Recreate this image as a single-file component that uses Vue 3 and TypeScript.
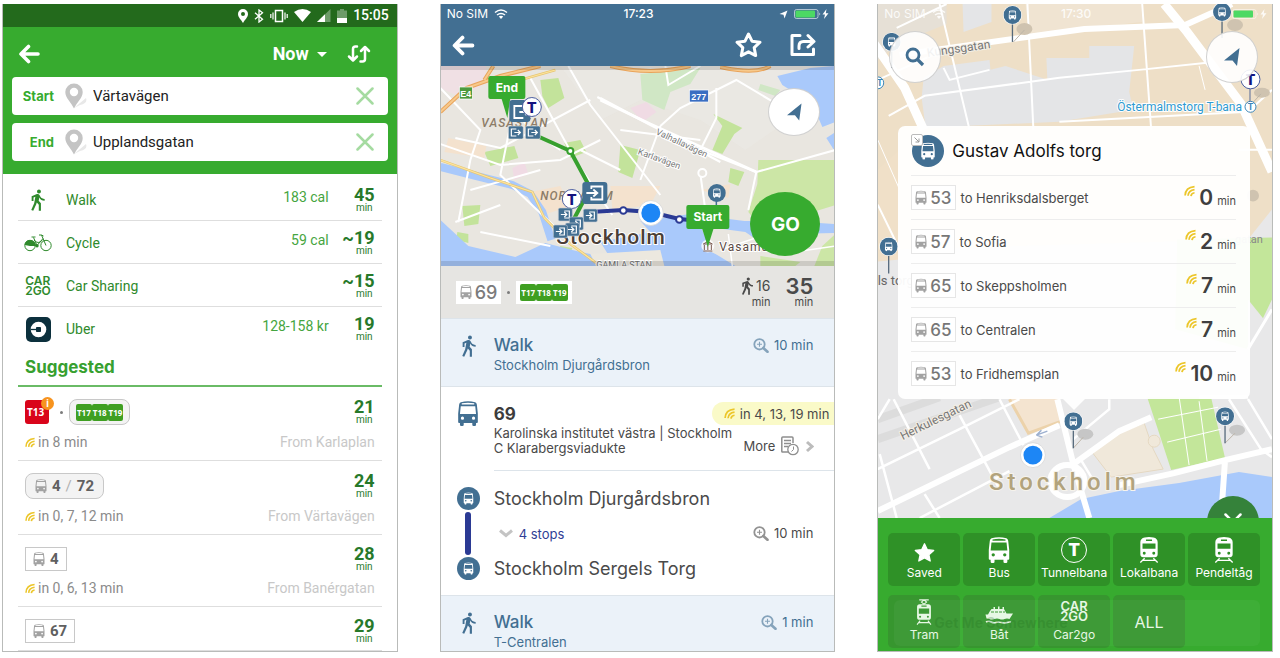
<script setup lang="ts">
import { ref } from 'vue'

interface Mode { icon: string; name: string; extra: string; time: string }
interface Trip { kind: 'metro' | 'group' | 'single'; lines: string[]; wait?: string; from?: string; time: string }
interface Departure { line: string; to: string; min: string }
interface Category { icon: string; name: string }

const start = ref('Värtavägen')
const end = ref('Upplandsgatan')
const when = ref('Now')

const modes: Mode[] = [
  { icon: 'walk', name: 'Walk', extra: '183 cal', time: '45' },
  { icon: 'cycle', name: 'Cycle', extra: '59 cal', time: '~19' },
  { icon: 'car2go', name: 'Car Sharing', extra: '', time: '~15' },
  { icon: 'uber', name: 'Uber', extra: '128-158 kr', time: '19' },
]
const trips: Trip[] = [
  { kind: 'metro', lines: ['T17', 'T18', 'T19'], wait: 'in 8 min', from: 'From Karlaplan', time: '21' },
  { kind: 'group', lines: ['4', '72'], wait: 'in 0, 7, 12 min', from: 'From Värtavägen', time: '24' },
  { kind: 'single', lines: ['4'], wait: 'in 0, 6, 13 min', from: 'From Banérgatan', time: '28' },
  { kind: 'single', lines: ['67'], time: '29' },
]
const departures: Departure[] = [
  { line: '53', to: 'to Henriksdalsberget', min: '0' },
  { line: '57', to: 'to Sofia', min: '2' },
  { line: '65', to: 'to Skeppsholmen', min: '7' },
  { line: '65', to: 'to Centralen', min: '7' },
  { line: '53', to: 'to Fridhemsplan', min: '10' },
]
const categories: Category[] = [
  { icon: 'star', name: 'Saved' },
  { icon: 'bus', name: 'Bus' },
  { icon: 'metro', name: 'Tunnelbana' },
  { icon: 'train', name: 'Lokalbana' },
  { icon: 'train', name: 'Pendeltåg' },
  { icon: 'tram', name: 'Tram' },
  { icon: 'boat', name: 'Båt' },
  { icon: 'car2go', name: 'Car2go' },
]
const stopPins = [
  { x: 1013, y: 15, len: 27 },
  { x: 1223, y: 12, len: 26 },
  { x: 892, y: 42, len: 26 },
  { x: 889, y: 247, len: 27 },
  { x: 1074, y: 422, len: 27 },
  { x: 1226, y: 417, len: 27 },
]
const exits = [
  { x: 508, y: 126 }, { x: 525, y: 126 },
]
const entries = [
  { x: 558, y: 208 }, { x: 583, y: 209 }, { x: 569, y: 217 }, { x: 565, y: 223 }, { x: 553, y: 225 },
]
</script>

<template>
  <svg class="defs" width="0" height="0" aria-hidden="true">
    <symbol id="i-bus" viewBox="0 0 24 28">
      <path fill-rule="evenodd" fill="currentColor" d="M4 1.400Q12-.6 20 1.400Q21.600 2 21.900 4L23 14V23.500Q23 24.600 22 24.600H21V26.600Q21 28 19.600 28H18.200Q16.800 28 16.800 26.600V24.600H7.200V26.600Q7.200 28 5.800 28H4.400Q3 28 3 26.600V24.600H2Q1 24.600 1 23.500V14L2.100 4Q2.400 2 4 1.400ZM5 2.600V4H19V2.600Q12 1.400 5 2.600ZM3.900 6L3 14.500H21L20.100 6ZM5.800 17.400A1.800 1.800 0 1 0 5.800 21A1.800 1.800 0 1 0 5.800 17.400ZM18.200 17.400A1.800 1.800 0 1 0 18.200 21A1.800 1.800 0 1 0 18.200 17.400Z" />
    </symbol>
    <symbol id="i-walk" viewBox="5 1 15 22.500">
      <path fill="currentColor" d="M13.500 5.500c1.100 0 2-.9 2-2s-.9-2-2-2-2 .9-2 2 .9 2 2 2zM9.800 8.900L8.600 15.500 5.600 22.600l2 .7 3-6.500.7-2 2 2.400v6h2.200v-7.500l-2.300-2.600.7-3.500C14.800 11.900 16.800 13 19.300 13v-1.900c-1.900 0-3.500-1-4.300-2.300l-1-1.600c-.4-.7-1-1.100-1.800-1.100-.3 0-.5.1-.8.1L6 8.300V13.200h1.900V9.700l1.900-.8" />
    </symbol>
    <symbol id="i-cycle" viewBox="0 0 28 18">
      <g fill="none" stroke="currentColor" stroke-width="1">
        <circle cx="6" cy="11.500" r="5.200" /><circle cx="22" cy="11.500" r="5.200" />
        <path d="M6 11.500H13L19 4.500M13 11.500L9.500 3.500M7.500 3H11.500M22 11.500L17.500 1H15M17.500 1L19.500 2M10 6Q14 11 18.500 6" />
      </g>
      <path fill="currentColor" d="M.6 11Q1.500 5.500 7 6Q11.500 7 12 11.500L6 12Z" /><circle cx="13" cy="11.800" r="1.700" fill="currentColor" />
    </symbol>
    <symbol id="i-uber" viewBox="0 0 25 25">
      <rect width="25" height="25" rx="5" fill="#0c303d" /><circle cx="12.500" cy="12.500" r="7.800" fill="#fff" />
      <path d="M4.500 12.500H11" stroke="#0c303d" stroke-width="1.300" /><rect x="10" y="10" width="5" height="5" rx=".8" fill="#0c303d" />
    </symbol>
    <symbol id="i-live" viewBox="0 0 12 12">
      <path d="M1.200 11Q1.500 2 11.500 1.200M4.400 11.200Q4.800 5.400 11.500 4.500M7.600 11.500Q8 8.400 11.500 7.900" fill="none" stroke="#ecc62a" stroke-width="1.900" />
    </symbol>
    <symbol id="i-back" viewBox="0 0 22 20">
      <path d="M10.500 2.500L3 10L10.500 17.500M3.500 10H20" fill="none" stroke="currentColor" stroke-width="3.600" stroke-linecap="round" stroke-linejoin="round" />
    </symbol>
    <symbol id="i-pin" viewBox="0 0 22 26">
      <path d="M9 25L21 15Q23 20 15 22Z" fill="#e8e8e8" />
      <path fill-rule="evenodd" fill="#c4c4c4" d="M9 .5A8.700 8.700 0 0 1 17.700 9C17.700 15 12 19 9 25.500C6 19 .3 15 .3 9A8.700 8.700 0 0 1 9 .5ZM9 4.800A4.200 4.200 0 1 0 9 13.200A4.200 4.200 0 1 0 9 4.800Z" />
    </symbol>
    <symbol id="i-x" viewBox="0 0 18 18"><path d="M1.500 1.500L16.500 16.500M16.500 1.500L1.500 16.500" stroke="currentColor" stroke-width="2.500" stroke-linecap="round" /></symbol>
    <symbol id="i-arrow" viewBox="0 0 16 18"><path fill="currentColor" d="M15.500 0L13 18L8.500 12.500L0 12.500Z" /></symbol>
    <symbol id="i-mag" viewBox="0 0 16 15">
      <circle cx="6.500" cy="6.300" r="5.200" fill="none" stroke="currentColor" stroke-width="1.800" /><path d="M10.300 10L14.500 13.800" stroke="currentColor" stroke-width="2.600" stroke-linecap="round" /><path d="M4 6.300H9M6.500 3.800V8.800" stroke="currentColor" stroke-width="1.100" />
    </symbol>
    <symbol id="i-wifi" viewBox="0 0 14 10">
      <path d="M1 3.500Q7-1.500 13 3.500M3 6Q7 2.800 11 6" stroke="currentColor" stroke-width="1.500" fill="none" /><path d="M4.800 7.600Q7 6 9.200 7.600L7 10Z" fill="currentColor" />
    </symbol>
    <symbol id="i-power" viewBox="0 0 36 10">
      <rect x=".5" y=".5" width="23.500" height="9" rx="2" fill="none" stroke="currentColor" opacity=".6" /><rect x="1.500" y="1.500" width="19.500" height="7" rx="1" fill="#4cd964" /><path d="M25.500 3.500Q27 5 25.500 6.500Z" fill="currentColor" /><path d="M32.500 0L28.500 5.500H31L30 10L34.500 4.200H31.800Z" fill="currentColor" />
    </symbol>
    <symbol id="i-star" viewBox="0 0 24 23"><path fill="currentColor" stroke="currentColor" stroke-width="1.500" stroke-linejoin="round" d="M12 1.500L15.100 8.200L22.500 9.100L17 14L18.500 21.200L12 17.600L5.500 21.200L7 14L1.500 9.100L8.900 8.200Z" /></symbol>
    <symbol id="i-train" viewBox="0 0 24 30">
      <path fill-rule="evenodd" fill="currentColor" d="M7 .5Q12-.5 17 .5Q22 1.500 22 6V20Q22 23.500 18.500 23.500H5.500Q2 23.500 2 20V6Q2 1.500 7 .5ZM8.500 2.800V4.600H15.500V2.800ZM4.500 7.500V13.500H19.500V7.500ZM6.500 17A1.700 1.700 0 1 0 6.500 20.400A1.700 1.700 0 1 0 6.500 17ZM17.500 17A1.700 1.700 0 1 0 17.500 20.400A1.700 1.700 0 1 0 17.500 17Z" />
      <path d="M7 24.500L2 29.500M17 24.500L22 29.500M5.500 27H18.500" stroke="currentColor" stroke-width="1.500" />
    </symbol>
    <symbol id="i-tram" viewBox="0 0 20 30">
      <path d="M4.500 1H15.500M7 3.500L10 1L13 3.500L10 6Z" fill="none" stroke="currentColor" stroke-width="1.200" />
      <path fill-rule="evenodd" fill="currentColor" d="M5 6H15Q18 6 18 9V21Q18 24 15 24H5Q2 24 2 21V9Q2 6 5 6ZM7 7.500V9H13V7.500ZM4 11V17H16V11ZM5.500 19.300A1.200 1.200 0 1 0 5.500 21.700A1.200 1.200 0 1 0 5.500 19.300ZM14.500 19.300A1.200 1.200 0 1 0 14.500 21.700A1.200 1.200 0 1 0 14.500 19.300Z" />
      <path d="M5.500 25L2 29.500M14.500 25L18 29.500M4 27.300H16" stroke="currentColor" stroke-width="1.300" />
    </symbol>
    <symbol id="i-boat" viewBox="0 0 28 20">
      <path fill="currentColor" d="M5 6L6.500 4H8.500V2H10V4H13V1.500H14.500V4H17.500V2H19V4L21.500 8.500H28L24.500 14Q22 12.800 19.500 14Q17 15.200 14.500 14Q12 12.800 9.500 14Q7 15.200 4.500 14L1.500 13.500L.5 9.500H3Z" />
      <path d="M6 7H20" stroke="#37972f" stroke-width="1.200" stroke-dasharray="3 1" />
      <path d="M1 17Q3.500 15.500 6 17T11 17.500T16.500 17.500T22 17.500T26 17" fill="none" stroke="currentColor" stroke-width="1.600" />
    </symbol>
    <symbol id="i-stop" viewBox="0 0 24 24">
      <circle cx="12" cy="12" r="12" fill="#426f92" /><use href="#i-bus" x="6.500" y="5.500" width="11" height="13" color="#fff" />
    </symbol>
  </svg>

  <main class="page">
    <!-- Route suggestions -->
    <section class="phone android">
      <header class="a-head">
        <div class="a-status">
          <svg width="10" height="14" viewBox="0 0 10 14"><path fill="#fff" fill-rule="evenodd" d="M5 0A5 5 0 0 1 10 5C10 8.500 6.500 11 5 14C3.500 11 0 8.500 0 5A5 5 0 0 1 5 0ZM5 3A2 2 0 1 0 5 7A2 2 0 1 0 5 3Z" /></svg>
          <svg width="10" height="14" viewBox="0 0 10 14"><path d="M1 3.800L8.500 10.200L5 13V1L8.500 3.800L1 10.200" fill="none" stroke="#fff" stroke-width="1.300" /></svg>
          <svg width="18" height="14" viewBox="0 0 18 14"><rect x="5.500" y="1.500" width="7" height="11" fill="none" stroke="#fff" stroke-width="1.500" /><path d="M3 3.500V10.500M.8 5V9M15 3.500V10.500M17.200 5V9" stroke="#fff" stroke-width="1.200" /></svg>
          <svg width="17" height="13" viewBox="0 0 17 13"><path d="M0 3Q8.500-3 17 3L8.500 13Z" fill="#fff" /></svg>
          <svg width="14" height="13" viewBox="0 0 14 13"><path d="M13.500 0V13H0Z" fill="#6d9c69" /><path d="M8 5.300V13H0Z" fill="#fff" /></svg>
          <svg class="cell" width="10" height="14" viewBox="0 0 10 14"><path d="M3 0H7V1.500H10V14H0V1.500H3Z" fill="#6d9c69" /><path d="M0 9H10V14H0Z" fill="#fff" /></svg>
          <span class="clock">15:05</span>
        </div>
        <div class="a-bar">
          <button class="icon-btn" aria-label="Back"><svg width="22" height="20"><use href="#i-back" /></svg></button>
          <div class="a-actions">
            <label class="when">
              <select v-model="when" aria-label="Departure time"><option>Now</option></select>
              <svg width="10" height="5" viewBox="0 0 10 5"><path d="M0 0H10L5 5Z" fill="#fff" /></svg>
            </label>
            <button class="icon-btn" aria-label="Swap"><svg width="24" height="18" viewBox="0 0 24 18"><path d="M10 1.500H8.500Q6 1.500 6 4V15M2 11.500L6 15.500L10 11.500M13.500 16.500H15.500Q18 16.500 18 14V3M14 6L18 2L22 6" fill="none" stroke="#fff" stroke-width="2.500" stroke-linecap="round" stroke-linejoin="round" /></svg></button>
          </div>
        </div>
        <div class="fields">
          <div class="field">
            <label for="start">Start</label>
            <svg width="22" height="26"><use href="#i-pin" /></svg>
            <input id="start" v-model="start" type="text" />
            <button class="icon-btn clear" aria-label="Clear start" @click="start = ''"><svg width="18" height="18"><use href="#i-x" /></svg></button>
          </div>
          <div class="field">
            <label for="end">End</label>
            <svg width="22" height="26"><use href="#i-pin" /></svg>
            <input id="end" v-model="end" type="text" />
            <button class="icon-btn clear" aria-label="Clear end" @click="end = ''"><svg width="18" height="18"><use href="#i-x" /></svg></button>
          </div>
        </div>
      </header>
      <div class="a-body">
        <div v-for="m in modes" :key="m.name" class="mode">
          <span class="m-icon">
            <svg v-if="m.icon === 'walk'" width="16" height="22"><use href="#i-walk" /></svg>
            <svg v-else-if="m.icon === 'cycle'" width="28" height="18"><use href="#i-cycle" /></svg>
            <span v-else-if="m.icon === 'car2go'" class="c2g"><span>CAR</span><span>2GO</span></span>
            <svg v-else width="25" height="25"><use href="#i-uber" /></svg>
          </span>
          <span class="m-name">{{ m.name }}</span>
          <span class="m-extra">{{ m.extra }}</span>
          <span class="a-time"><b>{{ m.time }}</b><small>min</small></span>
        </div>
        <h2>Suggested</h2>
        <div v-for="t in trips" :key="t.time" class="trip">
          <div class="t-top">
            <template v-if="t.kind === 'metro'">
              <span class="red">T13<i class="info">i</i></span>
              <span class="dot"></span>
              <span class="badge round metro"><span v-for="l in t.lines" :key="l" class="green">{{ l }}</span></span>
            </template>
            <span v-else class="badge" :class="{ round: t.kind === 'group' }">
              <svg width="12" height="14"><use href="#i-bus" /></svg>
              <b>{{ t.lines[0] }}</b>
              <template v-if="t.lines[1]"><span class="slash">/</span><b>{{ t.lines[1] }}</b></template>
            </span>
            <span class="a-time"><b>{{ t.time }}</b><small>min</small></span>
          </div>
          <div v-if="t.wait" class="t-sub">
            <svg width="10" height="11"><use href="#i-live" /></svg>
            <span>{{ t.wait }}</span>
            <span class="from">{{ t.from }}</span>
          </div>
        </div>
      </div>
    </section>

    <!-- Trip details -->
    <section class="phone ios">
      <header class="d-head">
        <div class="i-status">
          <span class="sim">No SIM <svg width="14" height="10"><use href="#i-wifi" /></svg></span>
          <span class="hour">17:23</span>
          <span class="power"><svg width="9" height="9" viewBox="0 0 16 18"><path fill="#fff" d="M16 1L10 17L8 9.500L0 8Z" /></svg><svg width="36" height="10"><use href="#i-power" /></svg></span>
        </div>
        <div class="d-bar">
          <button class="icon-btn" aria-label="Back"><svg width="24" height="21"><use href="#i-back" /></svg></button>
          <div class="d-actions">
            <button class="icon-btn" aria-label="Save"><svg width="29" height="28" viewBox="0 0 29 28"><path d="M14.500 3L18 10.200L26 11.200L20.200 16.700L21.700 24.600L14.500 20.800L7.300 24.600L8.800 16.700L3 11.200L11 10.200Z" fill="none" stroke="#fff" stroke-width="3" stroke-linejoin="round" /></svg></button>
            <button class="icon-btn" aria-label="Share"><svg width="26" height="24" viewBox="0 0 26 24"><path d="M10 2.500H2V21.500H23.500V16M9 15.500V13Q9 8.500 13.500 8.500H23M18 2.500L24 8.500L18 14" fill="none" stroke="#fff" stroke-width="3" stroke-linejoin="round" stroke-linecap="round" /></svg></button>
          </div>
        </div>
      </header>
      <div class="d-map">
        <svg class="map" viewBox="440 66 395 200" preserveAspectRatio="xMidYMid slice">
          <rect x="430" y="56" width="420" height="220" fill="#e9e6e0" />
          <path d="M440 66H486L484 84L462 98L440 88Z" fill="#f0e0e4" />
          <path d="M560 66H835V130L800 112L745 150L700 120L640 100L600 120Z" fill="#ebe9e5" opacity=".6" />
          <path d="M540 80L558 78L564 98L548 108L542 96ZM713 114L742 128L734 134L722 154L712 150L722 126ZM484 152L514 146L518 158L490 166ZM564 143L580 140L586 152L570 158ZM620 145L640 150L632 178L618 172ZM462 206L480 205L478 224L464 226ZM457 232L468 234L468 243L456 240ZM730 168L744 172L738 186L728 182ZM560 246L572 248L568 258L556 254Z" fill="#c3e39b" />
          <path d="M758 160H835V205L800 216L774 226L756 222L748 212L757 184Z" fill="#cce6a6" />
          <path d="M640 74L700 68L690 84L670 92L664 110L642 100ZM760 84L780 90L775 96L758 90Z" fill="#d0e7c5" />
          <path d="M630 108L646 102L656 112L642 122ZM512 168L524 162L528 174L514 180Z" fill="#f0dbe4" />
          <path d="M448 138L486 146L484 158L444 152ZM610 186L660 186L650 205L612 210ZM530 192L560 186L570 206L546 214ZM700 190L730 184L728 198Z" fill="#f4e2ce" />
          <path d="M777 76L810 68L835 66V122L822 127L812 104L782 85ZM826 138L835 132V152Z" fill="#a9c9fb" />
          <path d="M440 167L476 176L512 185L530 194L542 212L551 240" fill="none" stroke="#a9c9fb" stroke-width="8" />
          <path d="M440 220L468 246L515 257L545 243L580 252L610 258L600 242L650 232L640 221L690 214L744 221L790 221L835 224V233L790 234L762 247L740 253L712 226L706 250L745 266H440Z" fill="#a9c9fb" />
          <path d="M700 226L745 232L774 252L820 266H735L712 252Z" fill="#e9e6e0" />
          <path d="M835 234V266H814L822 246ZM760 256L800 262L795 266H760Z" fill="#cce6a6" />
          <path d="M590 254L660 250L664 266H596Z" fill="#ece8df" />
          <g fill="none" stroke="#fff" stroke-width="2">
            <path d="M440 88L480 130L470 160L458 222M500 90L530 130L560 150M530 78L575 160L612 215M568 66L590 105L660 195M597 97L650 125L700 150L756 172M600 98L720 162M590 100L500 148L455 138M620 130L700 140M660 126L680 108L736 80L800 118M660 126L640 180M716 88L716 118L700 150M665 66L668 85L700 66M756 172L748 210M700 174L705 210M440 144L500 165L560 160L600 140M510 125L500 175L560 232M470 190L540 170M580 150L620 170M455 222L500 205M480 232L550 246M756 172L835 150" />
            <path d="M600 100L650 124L756 172" stroke-width="3" /><circle cx="702" cy="173" r="4" fill="#e9e6e0" />
            <path d="M720 250L755 238L780 254L835 246M728 234L732 266" stroke-width="1.500" />
          </g>
          <path d="M440 112L466 88L500 76L540 66M484 80L493 66M610 66Q650 76 690 66M720 67Q755 75 770 66" fill="none" stroke="#e9a45b" stroke-width="4" />
          <path d="M440 112L466 88L500 76L540 66M484 80L493 66M610 66Q650 76 690 66M720 67Q755 75 770 66" fill="none" stroke="#f7c98b" stroke-width="2" />
          <path d="M440 160L490 178L532 192L544 218L570 244L600 266M520 80L555 70" fill="none" stroke="#e8c66f" stroke-width="2.500" />
          <path d="M440 160L490 178L532 192L544 218L570 244L600 266M520 80L555 70" fill="none" stroke="#fbe39f" stroke-width="1.300" />
          <rect x="459" y="87" width="13" height="12" fill="#4c9a3e" stroke="#fff" stroke-width=".7" /><text x="465.500" y="97" class="shield">E4</text>
          <rect x="689" y="90" width="19" height="12" fill="#3a6ec2" stroke="#fff" stroke-width=".7" /><text x="698.500" y="100" class="shield">277</text>
          <text x="481" y="127" class="district">VASASTAN</text>
          <text x="540" y="200" class="district">NORRMALM</text>
          <text transform="translate(655 134) rotate(25)" class="street">Valhallavägen</text>
          <text transform="translate(637 154) rotate(20)" class="street">Karlavägen</text>
          <text x="596" y="268" class="street">GAMLA STAN</text>
          <path d="M528 132L570 151L590 188L572 222" fill="none" stroke="#37a02e" stroke-width="4" />
          <path d="M590 212L623 210L650 212L679 219L700 221" fill="none" stroke="#2b3a94" stroke-width="4" />
          <g fill="#fff" stroke-width="2"><circle cx="570" cy="151" r="3" stroke="#37a02e" /><circle cx="623" cy="210.500" r="3.300" stroke="#2b3a94" /><circle cx="679" cy="219.500" r="3.300" stroke="#2b3a94" /></g>
          <text x="556" y="244" class="city">Stockholm</text>
          <path d="M510 98L507 118L501 98Z" fill="#37ab2f" />
          <rect x="509" y="100" width="21" height="22" rx="3" fill="#426f92" /><path d="M523 106H514V118H523M519 112H528M525 109L528 112L525 115" stroke="#fff" stroke-width="1.800" fill="none" />
          <rect x="488" y="76" width="37" height="23" rx="2" fill="#37ab2f" /><text x="506.500" y="92" class="flag">End</text>
          <circle cx="531.500" cy="107" r="9.500" fill="#fff" stroke="#4a5da0" /><text x="531.500" y="112.500" class="tee">T</text>
          <g v-for="(p, i) in exits" :key="'o' + i" :transform="`translate(${p.x} ${p.y})`">
            <rect width="15" height="13" rx="1.500" fill="#426f92" stroke="#e9e6e0" stroke-width=".6" /><path d="M8 3H3V10H8M6 6.500H12M9.500 4L12 6.500L9.500 9" fill="none" stroke="#fff" stroke-width="1.200" />
          </g>
          <rect x="582" y="182" width="25" height="22" rx="3" fill="#426f92" /><path d="M591 189V186.500H602V199.500H591V197M586 193H597M593 189.500L597 193L593 196.500" stroke="#fff" stroke-width="1.800" fill="none" />
          <circle cx="571.500" cy="199" r="9.500" fill="#fff" stroke="#4a5da0" /><text x="571.500" y="204.500" class="tee">T</text>
          <g v-for="(p, i) in entries" :key="'i' + i" :transform="`translate(${p.x} ${p.y})`">
            <rect width="14" height="13" rx="1.500" fill="#426f92" stroke="#c9cfd6" stroke-width=".6" /><path d="M6 3H11V10H6M2.500 6.500H8.500M6 4L8.500 6.500L6 9" fill="none" stroke="#fff" stroke-width="1.200" />
          </g>
          <circle cx="650.500" cy="213" r="12.500" fill="#fff" stroke="#d5d5d5" stroke-width=".8" /><circle cx="650.500" cy="213" r="9.500" fill="#1d86f5" />
          <path d="M716 200V210" stroke="#426f92" stroke-width="1.500" /><use href="#i-stop" x="707.500" y="184" width="18" height="18" />
          <circle cx="707.500" cy="246" r="6.500" fill="#fff" opacity=".8" /><path d="M703 244L707.500 241.500L712 244ZM704 245V250M707.500 245V250M711 245V250M703 251H712" stroke="#7a5a50" fill="none" />
          <text x="719" y="251" class="place">Vasamuseet</text>
          <path d="M701 226L707.500 247L714 226Z" fill="#37ab2f" /><rect x="686" y="205" width="43" height="24" rx="2" fill="#37ab2f" /><text x="707.500" y="221" class="flag">Start</text>
          <path d="M440 66H835V70H440ZM440 261H835V266H440Z" fill="#000" opacity=".12" />
        </svg>
        <button class="locate oval" aria-label="My location"><svg width="15" height="18"><use href="#i-arrow" /></svg></button>
        <button class="go">GO</button>
      </div>
      <div class="summary">
        <span class="s-badge"><svg width="12" height="14"><use href="#i-bus" /></svg>69</span>
        <span class="dot"></span>
        <span class="s-badge metro"><span v-for="l in ['T17', 'T18', 'T19']" :key="l" class="green">{{ l }}</span></span>
        <span class="s-walk"><span><svg width="13" height="18"><use href="#i-walk" /></svg>16</span><small>min</small></span>
        <span class="s-total"><b>35</b><small>min</small></span>
      </div>
      <div class="leg walk">
        <svg class="leg-icon" width="16" height="22"><use href="#i-walk" /></svg>
        <div class="leg-text"><strong>Walk</strong><span>Stockholm Djurgårdsbron</span></div>
        <button class="zoomer"><svg width="16" height="15"><use href="#i-mag" /></svg>10 min</button>
      </div>
      <div class="leg ride">
        <svg class="leg-icon" width="22" height="25"><use href="#i-bus" /></svg>
        <div class="ride-main">
          <div class="ride-top"><strong>69</strong><span class="pill"><svg width="11" height="11"><use href="#i-live" /></svg>in 4, 13, 19 min</span></div>
          <div class="ride-sub">
            <p>Karolinska institutet västra | Stockholm C Klarabergsviadukte</p>
            <button class="more">More
              <svg width="18" height="20" viewBox="0 0 18 20"><path d="M8 16H1.500Q.8 16 .8 15V2Q.8 1 1.800 1H11Q12 1 12 2V7M3 4.500H10M3 7.500H10M3 10.500H7" fill="none" stroke="#8e8e8e" stroke-width="1.500" /><circle cx="12" cy="13.500" r="5.200" fill="#fff" stroke="#8e8e8e" stroke-width="1.300" /><path d="M12.500 10.500V13.500L10.500 15.500" fill="none" stroke="#8e8e8e" /></svg>
              <svg width="9" height="13" viewBox="0 0 9 13"><path d="M2 2L7 6.500L2 11" fill="none" stroke="#bcbcbc" stroke-width="3" /></svg>
            </button>
          </div>
        </div>
      </div>
      <div class="stops">
        <div class="rail"><svg width="23" height="23"><use href="#i-stop" /></svg><span class="track"></span><svg width="23" height="23"><use href="#i-stop" /></svg></div>
        <div class="stop-rows">
          <strong>Stockholm Djurgårdsbron</strong>
          <div class="between">
            <button class="expand"><svg width="14" height="9" viewBox="0 0 14 9"><path d="M1 1.500L7 6.500L13 1.500" fill="none" stroke="#c4c4c4" stroke-width="3" /></svg>4 stops</button>
            <button class="zoomer gray"><svg width="16" height="15"><use href="#i-mag" /></svg>10 min</button>
          </div>
          <strong>Stockholm Sergels Torg</strong>
        </div>
      </div>
      <div class="leg walk">
        <svg class="leg-icon" width="16" height="22"><use href="#i-walk" /></svg>
        <div class="leg-text"><strong>Walk</strong><span>T-Centralen</span></div>
        <button class="zoomer"><svg width="16" height="15"><use href="#i-mag" /></svg>1 min</button>
      </div>
    </section>

    <!-- Nearby stops -->
    <section class="phone ios">
      <div class="n-map">
        <svg class="map" viewBox="878 4 395 515" preserveAspectRatio="xMidYMid slice">
          <rect x="870" y="-6" width="415" height="535" fill="#eedfc7" />
          <path d="M878 4H947V24L898 44L878 60Z" fill="#e6e0d6" />
          <path d="M963 4H992V22L964 32ZM924 78L944 66L990 60L991 70L1006 66L1048 80L1047 58L1090 58L1090 46L1135 46L1130 92L1134 110L1060 122L926 128L922 98Z" fill="#e4e5e7" />
          <path d="M1026 4H1142L1143 22L1030 34Z" fill="#f0e4d2" />
          <path d="M878 240H900V250L1249 240L1273 210V519H878Z" fill="#e8e8e9" />
          <path d="M878 170L900 150V260L878 262Z" fill="#f0e0c8" />
          <g fill="none" stroke="#fff">
            <path d="M900 55L1085 29L1186 25L1233 4" stroke-width="6" /><path d="M1165 4L1188 32L1242 104L1273 172" stroke-width="9" />
            <path d="M872 40L905 88L924 130" stroke-width="9" />
            <path d="M940 4L970 130M1028 4L1034 130M1143 4L1152 130M889 116L925 96L1060 78L1140 70L1215 62M878 80L940 52M897 28L947 4M944 68L950 80L990 70M1060 122L1249 112M1249 112L1273 90M1240 150H1273M878 205L900 250" stroke-width="2" />
            <path d="M878 140L900 190M1200 66L1206 90" stroke-width="1" />
          </g>
          <path d="M1178 240L1273 238V300L1249 350L1176 330Z" fill="#c3e69a" />
          <path d="M1249 300L1273 330V420L1249 400Z" fill="#e8e8e9" />
          <path d="M1010 398H1058L1062 420L1029 434Z" fill="#f4e4d0" /><path d="M1010 400L1029 434L1062 422" fill="none" stroke="#ecd2aa" stroke-width="3" />
          <path d="M1148 398H1212L1226 459L1172 471L1158 428Z" fill="#c3e69a" />
          <path d="M1159 420L1219 408M1168 443L1222 430M1180 398L1190 466M1200 402L1208 462" stroke="#fff" fill="none" />
          <path d="M1092 452L1110 438L1145 424L1154 450L1164 470L1112 478Z" fill="#f0e8da" stroke="#e5d8c2" /><circle cx="1155" cy="442" r="6" fill="#f0e8da" stroke="#e5d8c2" />
          <path d="M1050 519L1082 500L1120 492L1180 484L1240 473L1273 478V519Z" fill="#a9c9fb" />
          <path d="M878 440L1000 398M878 420L940 398" stroke="#dcdcdc" stroke-width="8" />
          <g fill="none" stroke="#fff">
            <path d="M878 512L1010 448L1060 426M1058 400L1074 465L1090 519M1074 465L1120 432L1152 418M1120 486L1175 474L1226 461L1273 450M1226 461L1222 519" stroke-width="6" />
            <path d="M878 470L960 430L1020 400M894 400L930 470M960 416L1000 490M1000 400L1024 446M878 420L890 400M920 519L1010 472M925 495L940 519M1074 440L1110 410V400M1080 458L1092 478M1230 400L1262 450L1273 458M1249 400L1273 440M880 455L897 519" stroke-width="2.500" />
            <ellipse cx="1068" cy="482" rx="17" ry="16" stroke-width="6" /><path d="M1249 350L1273 310M1200 398H1249" stroke-width="3" />
          </g>
          <path d="M1037 436L1048 432M1037 436L1042 431M1037 436L1043 438" stroke="#9db0cf" stroke-width="1.500" />
          <g fill="#cfc3b0"><ellipse cx="1025" cy="29" rx="8" ry="6" /><ellipse cx="1236" cy="25" rx="8" ry="6" /><ellipse cx="1263" cy="93" rx="8" ry="5" /><ellipse cx="1254" cy="196" rx="6" ry="6" /></g>
          <g fill="#c6c6c6"><ellipse cx="1086" cy="435" rx="8" ry="5.500" /><ellipse cx="1238" cy="431" rx="8" ry="5.500" /></g>
          <path d="M1014 42L1025 30M1074 449L1084 438M1226 444L1236 434M1251 106L1262 94" stroke="#bdb5a8" />
          <text transform="translate(928 57) rotate(-8)" class="street2">Kungsgatan</text>
          <text transform="translate(903 441) rotate(-26)" class="street2">Herkulesgatan</text>
          <text x="878" y="286" class="square">ls torg</text>
          <text x="1236" y="243" class="street3">gatan</text>
          <text x="1243" y="111" class="tbana">Östermalmstorg T-bana</text>
          <circle cx="1251.500" cy="107" r="5.500" fill="#fff" stroke="#3c86b8" /><text x="1251.500" y="110.500" class="t-small">T</text>
          <circle cx="878" cy="83" r="6" fill="#fff" stroke="#3c86b8" /><text x="880" y="86.500" class="t-small">T</text>
          <text x="1065" y="491" class="city2">Stockholm</text>
          <g v-for="p in stopPins" :key="p.x">
            <path :d="`M${p.x} ${p.y}V${p.y + p.len}`" stroke="#55697b" stroke-width="1.300" />
            <circle :cx="p.x" :cy="p.y" r="9.500" fill="#fff" /><use href="#i-stop" :x="p.x - 9" :y="p.y - 9" width="18" height="18" />
          </g>
          <path d="M1251 88V102" stroke="#55699a" /><circle cx="1251.500" cy="79.500" r="9.500" fill="#fff" stroke="#4a5da0" /><text x="1251.500" y="85" class="tee">T</text>
          <circle cx="1033.500" cy="456" r="12.500" fill="#fff" stroke="#d5d5d5" stroke-width=".8" /><circle cx="1033.500" cy="456" r="9.500" fill="#1d86f5" />
        </svg>
        <div class="i-status over">
          <span class="sim">No SIM <svg width="14" height="10"><use href="#i-wifi" /></svg></span>
          <span class="hour">17:30</span>
          <span class="power"><svg width="36" height="10"><use href="#i-power" /></svg></span>
        </div>
        <div class="n-tools">
          <button class="locate" aria-label="Search"><svg width="20" height="20" viewBox="0 0 20 20"><circle cx="8" cy="8" r="6" fill="none" stroke="currentColor" stroke-width="2.800" /><path d="M12.500 12.500L18 18" stroke="currentColor" stroke-width="3.200" /></svg></button>
          <button class="locate" aria-label="My location"><svg width="16" height="18"><use href="#i-arrow" /></svg></button>
        </div>
        <div class="card">
          <div class="card-title">
            <span class="card-icon"><svg width="32" height="32"><use href="#i-stop" /></svg><svg class="corner" width="12" height="12" viewBox="0 0 12 12"><rect x=".5" y=".5" width="11" height="11" rx="1.500" fill="#fff" stroke="#bbb" /><path d="M3.500 3.500L8 8M8 4.500V8H4.500" fill="none" stroke="#999" /></svg></span>
            <h3>Gustav Adolfs torg</h3>
          </div>
          <div v-for="(d, i) in departures" :key="i" class="dep">
            <span class="d-badge"><svg width="12" height="15"><use href="#i-bus" /></svg>{{ d.line }}</span>
            <span class="d-to">{{ d.to }}</span>
            <svg class="d-live" width="11" height="12"><use href="#i-live" /></svg>
            <b>{{ d.min }}</b><small>min</small>
          </div>
        </div>
        <button class="close" aria-label="Close"><svg width="18" height="18"><use href="#i-x" /></svg></button>
      </div>
      <nav class="cats">
        <button v-for="(c, i) in categories" :key="c.name" class="cat" :class="{ second: i > 4 }">
          <span v-if="c.icon === 'car2go'" class="c2g"><span>CAR</span><span>2GO</span></span>
          <span v-else-if="c.icon === 'metro'" class="metro-icon">T</span>
          <svg v-else-if="c.icon === 'star'" width="21" height="21"><use href="#i-star" /></svg>
          <svg v-else-if="c.icon === 'boat'" width="28" height="20"><use href="#i-boat" /></svg>
          <svg v-else width="24" height="26"><use :href="'#i-' + c.icon" /></svg>
          <span>{{ c.name }}</span>
        </button>
        <button class="cat second all">ALL</button>
        <div class="ghost" aria-hidden="true">Get Me Somewhere</div>
      </nav>
    </section>
  </main>
</template>

<style>
body { margin: 0; background: #fff; }
</style>

<style scoped>
* { box-sizing: border-box; }
.defs { position: absolute; }
svg { display: block; flex: none; }
button { font: inherit; color: inherit; border: 0; padding: 0; margin: 0; background: none; cursor: pointer; }
.page { display: grid; grid-template-columns: repeat(3, minmax(0, 1fr)); gap: 42px; height: 100vh; padding: 4px 7px 6px 2px; }
.phone { display: flex; flex-direction: column; overflow: hidden; border: 1px solid #b9bbb9; border-top: 0; background: #fff; min-height: 0; }
.android { font-family: Roboto, sans-serif; }
.ios { font-family: Inter, sans-serif; color: #4a4a4a; }
.phone > * { flex: none; }
.icon-btn { display: flex; align-items: center; color: #fff; }

.a-head { background: #37ab2f; padding-bottom: 13px; }
.a-status { display: flex; align-items: center; justify-content: flex-end; gap: 6px; height: 23px; padding-right: 8px; background: #236a1c; }
.clock { color: #fff; font-size: 14px; font-weight: 500; line-height: 23px; }
.a-bar { display: flex; align-items: center; justify-content: space-between; height: 50px; padding: 4px 26px 0 15px; }
.a-actions { display: flex; align-items: center; gap: 20px; }
.when { display: flex; align-items: center; gap: 7px; }
.when select { appearance: none; border: 0; padding: 0; background: none; color: #fff; font: 700 18px/24px Roboto, sans-serif; }
.fields { display: grid; gap: 8px; padding: 0 9px; }
.field { display: flex; align-items: center; height: 38px; padding: 0 14px 0 7px; background: #fff; border-radius: 4px; }
.field label { width: 35px; margin-right: 11px; text-align: right; color: #37ab2f; font: 700 13px/20px Inter, sans-serif; }
.field input { flex: 1; min-width: 0; border: 0; outline: 0; padding: 0 0 0 6px; background: none; color: #222; font: 400 15px/20px Roboto, sans-serif; }
.clear { color: #a5dba1; }

.a-body { padding: 4px 15px 0; }
.mode { display: grid; grid-template-columns: 41px 1fr auto 46px; align-items: center; height: 43px; padding: 2px 7px 0; border-bottom: 1px solid #dedede; color: #2f8a2c; font-size: 14px; }
.mode:nth-child(4) { border-bottom-color: transparent; }
.m-icon { display: flex; justify-content: center; width: 26px; }
.m-extra { color: #45a540; line-height: 16px; padding-bottom: 7px; }
.a-time { display: flex; flex-direction: column; align-items: flex-end; color: #27792a; }
.a-time b { font-size: 18px; line-height: 15px; }
.a-time small { font-size: 10px; line-height: 12px; padding-right: 2px; }
.c2g { display: flex; flex-direction: column; font: 600 12px/10px Inter, sans-serif; }
h2 { margin: 0; height: 37px; padding-left: 7px; border-bottom: 2px solid #6abb66; color: #37a02f; font: 700 17px/34px Inter, sans-serif; }
.trip { padding: 12px 7px 7px; border-bottom: 1px solid #dedede; }
.t-top { display: flex; align-items: center; }
.t-top .a-time { margin: -6px 0 -6px auto; }
.badge { display: flex; align-items: center; gap: 5px; height: 24px; padding: 0 7px; border: 1px solid #c8c8c8; color: #969696; }
.badge b { font-size: 15px; color: #606060; }
.badge.round { height: 26px; padding: 0 9px; border-radius: 8px; background: #f3f3f3; }
.badge.round.metro { padding: 0 6px; gap: 0; }
.slash { font-size: 15px; color: #b0b0b0; }
.green { padding: 0 1px; height: 17px; border-radius: 2px; background: #3f9f22; color: #fff; font: 700 8px/17px "Noto Sans", sans-serif; }
.dot { width: 3px; height: 3px; border-radius: 50%; background: #7c7c7c; margin: 0 6px; }
.red { position: relative; width: 24px; height: 24px; border-radius: 3px; background: #d9041a; color: #fff; font: 700 10px/24px "Noto Sans", sans-serif; margin-right: 5px; padding-left: 2px; }
.info { position: absolute; top: -3px; right: -5px; width: 13px; height: 13px; border-radius: 50%; background: #f7931e; text-align: center; font: 700 10px/13px Roboto, sans-serif; }
.t-sub { display: flex; align-items: center; gap: 3px; margin-top: 7px; color: #8b8b8b; font-size: 14px; line-height: 20px; padding-bottom: 1px; }
.from { margin-left: auto; color: #c8c8c8; }

.d-head { background: #426f92; color: #fff; }
.i-status { display: grid; grid-template-columns: 1fr auto 1fr; align-items: center; height: 20px; padding: 0 4px 0 6px; font-size: 12px; line-height: 20px; color: #fff; }
.sim { display: flex; align-items: center; gap: 6px; }
.hour { font-weight: 500; }
.power { display: flex; align-items: center; justify-content: flex-end; gap: 6px; }
.d-bar { display: flex; align-items: center; justify-content: space-between; height: 42px; padding: 0 18px 0 10px; }
.d-actions { display: flex; align-items: center; gap: 27px; }
.d-map { position: relative; height: 200px; }
.map { position: absolute; inset: 0; width: 100%; height: 100%; }
.locate { display: flex; align-items: center; justify-content: center; width: 52px; height: 52px; border-radius: 50%; background: rgba(255, 255, 255, .9); border: 1px solid rgba(190, 190, 190, .7); color: #426f92; }
.locate.oval { position: absolute; top: 22px; right: 14px; height: 48px; background: #fff; }
.go { position: absolute; right: 14px; bottom: 10px; width: 70px; height: 64px; border-radius: 50%; background: #37ab2f; color: #fff; font-size: 19px; font-weight: 700; }
.shield { font: 700 9px "Liberation Sans", sans-serif; fill: #fff; text-anchor: middle; }
.district { font: italic 500 12px Roboto, sans-serif; fill: #8c7c68; letter-spacing: 1px; }
.street { font: 400 9px Roboto, sans-serif; fill: #777; stroke: #fff; stroke-width: 2px; paint-order: stroke; }
.city { font: 500 21px Roboto, sans-serif; letter-spacing: 1px; fill: #4b3e36; stroke: #fff; stroke-width: 2px; paint-order: stroke; }
.flag { font: 700 12px Inter, sans-serif; fill: #fff; text-anchor: middle; }
.tee { font: 900 15px Roboto, sans-serif; fill: #14137f; text-anchor: middle; }
.place { font: 400 12px Roboto, sans-serif; fill: #5a4a44; stroke: #fff; stroke-width: 2px; paint-order: stroke; letter-spacing: 1px; }
.summary { display: flex; align-items: center; height: 52px; padding: 0 21px 0 15px; background: #e6e5e2; }
.s-badge { display: flex; align-items: center; gap: 3px; height: 23px; padding: 0 4px; background: #fff; color: #7b7b7b; font-size: 18px; font-weight: 500; }
.s-badge.metro { gap: 0; padding: 0 4px; }
.s-walk, .s-total { display: flex; flex-direction: column; align-items: flex-end; line-height: 16px; }
.s-walk { margin-left: auto; }
.s-walk > span { display: flex; align-items: center; gap: 2px; height: 19px; font-size: 14px; }
.summary small { font-size: 11px; line-height: 12px; }
.s-total { margin-left: 15px; }
.s-total b { font-size: 22px; line-height: 19px; font-weight: 600; }
.leg { display: grid; grid-template-columns: 37px minmax(0, 1fr) auto; padding-left: 16px; }
.leg-icon { justify-self: start; }
.walk { height: 69px; padding: 16px 21px 0 16px; background: #ebf2f9; border-top: 1px solid #dde4ea; border-bottom: 1px solid #dde4ea; color: #426f92; }
.walk .leg-icon { margin-left: 4px; }
.leg-text { display: flex; flex-direction: column; font-size: 13px; line-height: 18px; }
.leg-text strong { font-size: 17px; font-weight: 500; line-height: 21px; }
.zoomer { display: flex; align-items: center; align-self: start; gap: 5px; font-size: 13px; line-height: 21px; }
.zoomer svg { opacity: .6; }
.ride { height: 84px; padding-top: 14px; }
.ride > .leg-icon { color: #426f92; }
.ride-main { grid-column: 2 / 4; border-bottom: 1px solid #dde4ea; }
.ride-top { display: flex; align-items: center; justify-content: space-between; height: 25px; }
.ride-top strong { font-size: 17px; font-weight: 700; color: #3c3c3c; }
.pill { display: flex; align-items: center; gap: 5px; height: 23px; padding: 0 5px 0 12px; border-radius: 12px 0 0 12px; background: #fafac8; font-size: 13px; }
.ride-sub { display: flex; justify-content: space-between; padding-right: 20px; }
.ride-sub p { flex: 1; margin: 0; font-size: 13px; line-height: 15px; }
.more { display: flex; align-items: center; gap: 6px; margin-top: 5px; height: 30px; font-size: 13px; }
.stops { display: grid; grid-template-columns: 37px minmax(0, 1fr); padding: 10px 21px 9px 16px; }
.rail { display: flex; flex-direction: column; align-items: center; width: 23px; padding: 6px 0; gap: 2px; }
.track { flex: 1; width: 6px; border-radius: 3px; background: #2b3a94; }
.stop-rows { display: grid; grid-auto-rows: 35px; align-items: center; }
.stop-rows strong { font-size: 18px; font-weight: 400; }
.between { display: flex; align-items: center; justify-content: space-between; }
.expand { display: flex; align-items: center; gap: 6px; padding-left: 5px; color: #2f3e96; font-size: 13px; }
.between .zoomer { align-self: center; }

.phone > .n-map { position: relative; flex: 1; min-height: 0; overflow: hidden; }
.over { position: relative; color: rgba(255, 255, 255, .85); }
.n-tools { position: relative; display: flex; justify-content: space-between; padding: 7px 14px 0 11px; }
.card { position: relative; margin: 43px 22px 0 20px; padding: 0 14px 4px 13px; border-radius: 7px; background: rgba(255, 255, 255, .95); }
.card::after { content: ""; position: absolute; top: 100%; left: 50%; margin-left: -11px; border: 11px solid transparent; border-top-color: rgba(255, 255, 255, .95); border-bottom: 0; }
.card-title { display: flex; align-items: center; gap: 8px; height: 49px; }
.card-icon { position: relative; margin-left: 1px; }
.corner { position: absolute; top: -1px; left: -1px; }
h3 { margin: 0; font-size: 17px; font-weight: 400; color: #111; }
.dep { display: flex; align-items: center; height: 44px; border-top: 1px solid #ededed; font-size: 13px; }
.d-badge { display: flex; align-items: center; gap: 3px; height: 25px; padding: 0 3px; border: 1px solid #e6e6e6; background: #fff; color: #777; font-size: 17px; font-weight: 500; }
.d-badge svg, .badge svg, .s-badge svg { color: #a2a2a2; }
.d-to { flex: 1; padding-left: 5px; }
.d-live { align-self: flex-start; margin: 9px 4px 0 0; }
.dep b { font-size: 21px; font-weight: 600; color: #3f3f3f; }
.dep small { font-size: 11px; padding: 7px 0 0 4px; }
.close { position: absolute; right: 13px; bottom: -30px; width: 52px; height: 52px; border-radius: 50%; display: flex; justify-content: center; align-items: center; background: #35823a; color: #fff; }
.street2 { font: 400 12px Roboto, sans-serif; fill: #777; stroke: #f4efe6; stroke-width: 2px; paint-order: stroke; }
.street3 { font: 400 11px Roboto, sans-serif; fill: #888; }
.square { font: 400 13px Roboto, sans-serif; fill: #666; }
.tbana { font: 400 12px Roboto, sans-serif; fill: #2f9ad0; text-anchor: end; stroke: #fff; stroke-width: 2px; paint-order: stroke; }
.t-small { font: 700 9px Roboto, sans-serif; fill: #3c86b8; text-anchor: middle; }
.city2 { font: 500 24px Roboto, sans-serif; fill: #b2a37d; stroke: #f6f3ec; stroke-width: 2px; paint-order: stroke; text-anchor: middle; letter-spacing: 4px; }
.cats { position: relative; display: grid; grid-template-columns: repeat(5, minmax(0, 1fr)); gap: 9px 3px; padding: 15px 12px 3px 10px; background: #37ab2f; }
.ghost { position: absolute; left: 16px; right: 12px; bottom: 5px; height: 46px; padding-left: 40px; border-radius: 6px; background: rgba(255, 255, 255, .04); color: rgba(30, 110, 30, .25); font-size: 14px; font-weight: 700; line-height: 46px; pointer-events: none; }
.cat { display: flex; flex-direction: column; align-items: center; justify-content: flex-end; gap: 2px; height: 53px; padding-bottom: 5px; border-radius: 5px; background: #2f9127; color: #fff; font-size: 12px; line-height: 16px; }
.cat.second { background: rgba(55, 146, 47, .85); color: #e6f8e4; }
.cat.all { justify-content: center; padding: 0; font-size: 16px; }
.cat .c2g { margin-bottom: 4px; font-size: 13px; }
.metro-icon { display: flex; align-items: center; justify-content: center; width: 26px; height: 26px; border: 1px solid #fff; border-radius: 50%; font: 900 18px/26px Roboto, sans-serif; }
</style>
